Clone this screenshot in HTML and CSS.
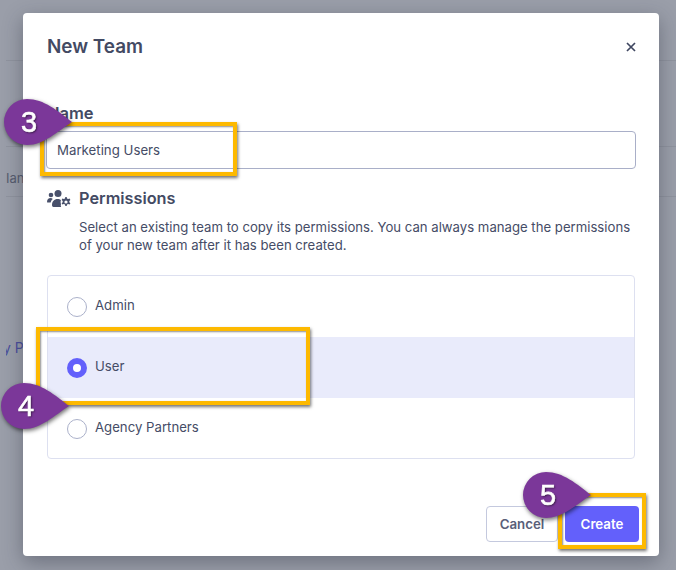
FILE: index.html
```html
<!DOCTYPE html>
<html lang="en">
<head>
<meta charset="utf-8">
<title>New Team</title>
<link rel="stylesheet" href="styles.css">
</head>
<body>
<div class="page">
  <div class="page-row page-row-head"></div>
  <div class="page-row page-row-a"></div>
  <div class="page-row page-row-b"><span>Ian</span></div>
  <div class="page-row page-row-c"><span class="page-link">y Pa</span></div>
</div>
<div class="modal">
  <header class="modal-head">
    <h1 class="modal-title">New Team</h1>
    <svg class="close" width="10" height="10" viewBox="0 0 10 10"><path d="M1 1l8 8M9 1l-8 8" stroke="#3f4660" stroke-width="1.700"/></svg>
  </header>
  <label class="field-label">Name</label>
  <div class="input">Marketing Users</div>
  <div class="perm-head">
    <svg class="perm-icon" width="24" height="17" viewBox="0 0 24 17" fill="#48506b">
      <circle cx="4" cy="5" r="2.300"/>
      <circle cx="11" cy="3.600" r="3.500"/>
      <path d="M0 12c0-2.500 1.500-4 3.500-4 1 0 1.700.3 2.300.9C4.500 10 3.800 11.300 3.700 12.600H1c-.6 0-1-.2-1-.6z"/>
      <path d="M5 15c0-3.600 2.300-6 5.500-6 1.500 0 2.700.4 3.500 1.100-.6 1.300-.5 2.800 0 4.100-.4.800-.3 1.800.2 2.800H6.500C5.600 17 5 16.200 5 15z"/>
      <path d="M18.300 7h1.400l.3 1.500 1.200.6 1.400-.5.8 1.300-1.100 1v1.300l1.100 1-.8 1.300-1.400-.5-1.200.6-.3 1.400h-1.400l-.3-1.400-1.200-.6-1.400.5-.8-1.300 1.100-1v-1.300l-1.100-1 .8-1.300 1.400.5 1.200-.6zM19 10.400a1.600 1.600 0 1 0 0 3.200 1.600 1.600 0 0 0 0-3.200z" fill-rule="evenodd"/>
    </svg>
    <h2 class="perm-title">Permissions</h2>
  </div>
  <p class="perm-text">Select an existing team to copy its permissions. You can always manage the permissions of your new team after it has been created.</p>
  <div class="options">
    <div class="option"><span class="radio"></span><span class="option-label">Admin</span></div>
    <div class="option option-on"><span class="radio radio-on"></span><span class="option-label">User</span></div>
    <div class="option"><span class="radio"></span><span class="option-label">Agency Partners</span></div>
  </div>
  <footer class="modal-foot">
    <button class="btn btn-cancel">Cancel</button>
    <button class="btn btn-create">Create</button>
  </footer>
</div>

<div class="box box-name"></div>
<div class="box box-user"></div>
<div class="box box-create"></div>

<div class="pin pin-3">
  <svg width="68" height="46" viewBox="0 0 68 46"><path d="M23 0C40 0 54 12 68 23 54 32 40 46 23 46A23 23 0 0 1 23 0z" fill="#7b3799"/></svg>
  <span class="pin-num">3</span>
</div>
<div class="pin pin-4">
  <svg width="68" height="46" viewBox="0 0 68 46"><path d="M23 0C40 0 54 12 68 23 54 32 40 46 23 46A23 23 0 0 1 23 0z" fill="#7b3799"/></svg>
  <span class="pin-num">4</span>
</div>
<div class="pin pin-5">
  <svg width="68" height="46" viewBox="0 0 68 46"><path d="M23 0C40 0 54 12 68 23 54 32 40 46 23 46A23 23 0 0 1 23 0z" fill="#7b3799"/></svg>
  <span class="pin-num">5</span>
</div>
</body>
</html>
```
FILE: styles.css
```css
* { box-sizing: border-box; }
html, body { margin: 0; height: 100%; }
body {
  position: relative;
  width: 676px;
  height: 570px;
  overflow: hidden;
  background: #9da1ac;
  font-family: Inter, "Liberation Sans", sans-serif;
  color: #454c66;
}
.page { padding-left: 6px; background: #9a9ea9; height: 570px; }
.page-row { border-bottom: 1px solid #8f939e; font-size: 13px; color: #565c6e; overflow: hidden; }
.page-row-head { height: 61px; }
.page-row-a { height: 86px; }
.page-row-b { height: 50px; padding-top: 23px; line-height: 16px; }
.page-row-c { height: 160px; border: 0; padding-top: 143px; line-height: 16px; font-size: 14px; }
.page-link { color: #4a4f9c; margin-left: -3px; }

.modal {
  position: absolute;
  left: 23px;
  top: 13px;
  width: 636px;
  height: 543px;
  padding: 0 24px;
  background: #fff;
  border-radius: 4px;
  box-shadow: 0 6px 20px rgba(40, 44, 60, .4);
}
.modal-head { display: flex; align-items: center; justify-content: space-between; height: 68px; }
.modal-title { margin: 0; font-size: 18.900px; font-weight: 600; line-height: 24px; color: #434a63; }
.close { margin-right: -1px; }
.field-label { display: block; margin-top: 23px; font-size: 16.500px; font-weight: 600; line-height: 18px; color: #434a63; }
.input {
  margin: 9px 0 0 -1px;
  width: 590px;
  height: 38px;
  padding-left: 10px;
  border: 1px solid #a9afc8;
  border-radius: 4px;
  font-size: 13.250px;
  line-height: 36px;
}
.perm-head { display: flex; align-items: center; gap: 8px; margin-top: 17px; height: 24px; }
.perm-title { margin: 0; font-size: 16.300px; font-weight: 600; color: #434a63; }
.perm-icon { flex: none; }
.perm-text { margin: 8px 0 0 32px; font-size: 13.170px; line-height: 18px; width: 560px; }
.options { margin-top: 21px; width: 588px; height: 184px; border: 1px solid #dde0f0; border-radius: 4px; }
.option { display: flex; align-items: center; gap: 8px; height: 61px; padding-left: 19px; font-size: 13.200px; }
.option-label { position: relative; top: -2px; }
.option-on { background: #e9ebfb; }
.radio { width: 20px; height: 20px; flex: none; border: 1px solid #abb1ca; border-radius: 50%; background: #fff; }
.radio-on { border: 6.500px solid #6360fb; }
.modal-foot { display: flex; justify-content: flex-end; margin: 47px -4px 0 0; }
.btn { height: 36px; border-radius: 4px; font: 600 13.300px Inter, "Liberation Sans", sans-serif; }
.btn-cancel { width: 72px; background: #fff; border: 1px solid #c4c9de; color: #5a6079; margin-right: 7px; }
.btn-create { width: 74px; background: #6360fb; border: 0; color: #fff; }

.box {
  position: absolute;
  border: 4px solid #fdb900;
  box-shadow: 1px 2px 3px rgba(0, 0, 0, .55), inset 1px 1px 2px rgba(0, 0, 0, .45);
}
.box-name { left: 40px; top: 122px; width: 197px; height: 54px; }
.box-user { left: 36px; top: 327px; width: 274px; height: 78px; }
.box-create { left: 558px; top: 493px; width: 88px; height: 56px; }

.pin { position: absolute; width: 68px; height: 46px; filter: drop-shadow(1px 2px 2px rgba(0, 0, 0, .55)); }
.pin svg { display: block; }
.pin-num {
  position: absolute;
  left: 0;
  top: 0;
  width: 50px;
  text-align: center;
  font: 400 29px/46px "Liberation Sans", sans-serif;
  -webkit-text-stroke: .6px #fff;
  color: #fff;
  text-shadow: 1px 1px 2px rgba(0, 0, 0, .6);
}
.pin-3 { left: 4px; top: 99px; }
.pin-4 { left: 1px; top: 383px; }
.pin-5 { left: 523px; top: 472px; }
```
